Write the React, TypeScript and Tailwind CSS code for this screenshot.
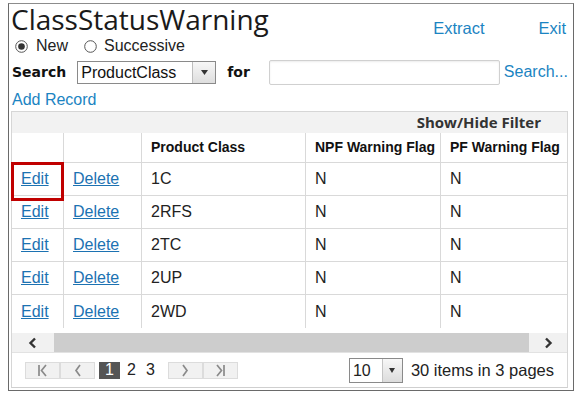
import React from "react";

const rows = ["1C", "2RFS", "2TC", "2UP", "2WD"];

function Radio({ checked }: { checked?: boolean }) {
  return (
    <svg width="13" height="13" viewBox="0 0 13 13" className="shrink-0">
      <circle cx="6.5" cy="6.5" r="5.8" fill="white" stroke="#555" strokeWidth="1" />
      {checked && <circle cx="6.5" cy="6.5" r="3.3" fill="#333" />}
    </svg>
  );
}

function PagerBtn({ children }: { children: React.ReactNode }) {
  return (
    <div className="w-[35px] h-[17px] bg-[#f1f1f1] border border-[#dcdcdc] flex items-center justify-center">
      {children}
    </div>
  );
}

export default function App() {
  const arial = { fontFamily: '"Liberation Sans", Arial, sans-serif' };
  return (
    <div className="w-[575px] h-[398px] bg-white pt-[3px] pl-[8px] relative" style={arial}>
      <div className="w-[566px] h-[388px] border border-[#6a6a6a] border-t-[#8c8c8c] flex flex-col">
        {/* Title row */}
        <div className="h-[32px] flex items-end justify-between pr-[7px]">
          <div
            className="text-[28px] leading-[32px] text-[#1a1a1a] pl-[2px] mb-[1px]"
            style={{ fontFamily: '"Open Sans", "Noto Sans", sans-serif' }}
          >
            ClassStatusWarning
          </div>
          <div className="flex gap-[54px] text-[16.5px] text-[#1b84c2] leading-[20px] mb-[-2px]">
            <span>Extract</span>
            <span>Exit</span>
          </div>
        </div>
        {/* Radio row */}
        <div className="h-[20px] flex items-center pl-[6px] text-[16px] text-[#222]">
          <Radio checked />
          <span className="ml-[8px]">New</span>
          <span className="ml-[16px]">
            <Radio />
          </span>
          <span className="ml-[7px]">Successive</span>
        </div>
        {/* Search row */}
        <div className="h-[26px] mt-[3px] flex items-center pl-[3px]">
          <span
            className="text-[14px] font-bold text-[#111]"
            style={{ fontFamily: '"DejaVu Sans", Verdana, sans-serif' }}
          >
            Search
          </span>
          <div className="ml-[11px] w-[139px] h-[23px] border border-[#8a8a8a] flex bg-white">
            <div className="flex-1 text-[16px] leading-[21px] pl-[3px] text-[#111]">ProductClass</div>
            <div className="w-[23px] h-full bg-gradient-to-b from-[#f7f7f7] to-[#dedede] border-l border-[#bdbdbd] flex items-center justify-center">
              <svg width="7" height="5" viewBox="0 0 7 5">
                <polygon points="0,0 7,0 3.5,5" fill="#333" />
              </svg>
            </div>
          </div>
          <span
            className="ml-[11px] text-[14px] font-bold text-[#111]"
            style={{ fontFamily: '"DejaVu Sans", Verdana, sans-serif' }}
          >
            for
          </span>
          <div className="ml-[19px] w-[231px] h-[25px] border border-[#d0d0d0] rounded-[2px] shadow-[inset_0_1px_2px_rgba(0,0,0,0.08)]" />
          <span className="ml-[4px] text-[16px] text-[#1b84c2]">Search...</span>
        </div>
        {/* Add record */}
        <div className="h-[22px] flex items-center pl-[3px] text-[16px] text-[#1b84c2] mt-[4px]">
          Add Record
        </div>
        {/* Grid */}
        <div className="ml-[2px] w-[557px] flex-1 border border-[#d6d6d6] border-b-[#cfcfcf] flex flex-col mb-[2px]">
          <div
            className="h-[21px] shrink-0 bg-[#f2f2f2] flex items-center justify-end pr-[26px] text-[15px] font-bold text-[#333]"
            style={{ fontFamily: '"Open Sans", "Noto Sans", sans-serif' }}
          >
            Show/Hide Filter
          </div>
          <div className="overflow-hidden shrink-0">
            <div className="flex h-[30px] border-b border-[#d9d9d9] text-[14px] font-bold text-[#111]">
              <div className="w-[52px] shrink-0 border-r border-[#d9d9d9]" />
              <div className="w-[78px] shrink-0 border-r border-[#d9d9d9]" />
              <div className="w-[164px] shrink-0 border-r border-[#d9d9d9] flex items-center pl-[9px]">Product Class</div>
              <div className="w-[135px] shrink-0 border-r border-[#d9d9d9] flex items-center pl-[9px] whitespace-nowrap">NPF Warning Flag</div>
              <div className="w-[140px] shrink-0 flex items-center pl-[9px] whitespace-nowrap">PF Warning Flag</div>
            </div>
            {rows.map((r, i) => (
              <div
                key={r}
                className={`flex h-[33px] text-[16px] text-[#222] ${i < rows.length - 1 ? "border-b border-[#d9d9d9]" : ""}`}
              >
                <div className="w-[52px] shrink-0 border-r border-[#d9d9d9] flex items-center pl-[9px]">
                  <span className="text-[#1c72b2] underline">Edit</span>
                </div>
                <div className="w-[78px] shrink-0 border-r border-[#d9d9d9] flex items-center pl-[9px]">
                  <span className="text-[#1c72b2] underline">Delete</span>
                </div>
                <div className="w-[164px] shrink-0 border-r border-[#d9d9d9] flex items-center pl-[9px]">{r}</div>
                <div className="w-[135px] shrink-0 border-r border-[#d9d9d9] flex items-center pl-[9px]">N</div>
                <div className="w-[140px] shrink-0 flex items-center pl-[9px]">N</div>
              </div>
            ))}
          </div>
          {/* scrollbar */}
          <div className="mt-[5px] h-[20px] shrink-0 flex border-b border-[#e2e2e2]">
            <div className="w-[42px] bg-[#f1f1f1] flex items-center justify-center">
              <svg width="10" height="12" viewBox="0 0 10 12">
                <polyline points="7,1.5 2.5,6 7,10.5" fill="none" stroke="#333" strokeWidth="2.4" />
              </svg>
            </div>
            <div className="flex-1 bg-[#cdcdcd]" />
            <div className="w-[38px] bg-[#f1f1f1] flex items-center justify-center">
              <svg width="10" height="12" viewBox="0 0 10 12">
                <polyline points="3,1.5 7.5,6 3,10.5" fill="none" stroke="#333" strokeWidth="2.4" />
              </svg>
            </div>
          </div>
          {/* pager */}
          <div className="flex-1 flex items-center pl-[13px] pr-[13px] text-[16px] text-[#222]">
            <div className="flex">
              <PagerBtn>
                <svg width="14" height="13" viewBox="0 0 14 13">
                  <line x1="3" y1="1" x2="3" y2="12" stroke="#8a8a8a" strokeWidth="1.7" />
                  <polyline points="10,1 5.5,6.5 10,12" fill="none" stroke="#8a8a8a" strokeWidth="1.7" />
                </svg>
              </PagerBtn>
              <PagerBtn>
                <svg width="10" height="13" viewBox="0 0 10 13">
                  <polyline points="7,1 3,6.5 7,12" fill="none" stroke="#8a8a8a" strokeWidth="1.7" />
                </svg>
              </PagerBtn>
            </div>
            <div className="ml-[4px] w-[21px] h-[17px] bg-[#555] text-white flex items-center justify-center leading-none">1</div>
            <span className="ml-[7px]">2</span>
            <span className="ml-[10px]">3</span>
            <div className="flex ml-[13px]">
              <PagerBtn>
                <svg width="10" height="13" viewBox="0 0 10 13">
                  <polyline points="3,1 7,6.5 3,12" fill="none" stroke="#8a8a8a" strokeWidth="1.7" />
                </svg>
              </PagerBtn>
              <PagerBtn>
                <svg width="14" height="13" viewBox="0 0 14 13">
                  <polyline points="4,1 8.5,6.5 4,12" fill="none" stroke="#8a8a8a" strokeWidth="1.7" />
                  <line x1="11" y1="1" x2="11" y2="12" stroke="#8a8a8a" strokeWidth="1.7" />
                </svg>
              </PagerBtn>
            </div>
            <div className="ml-auto flex items-center">
              <div className="w-[54px] h-[25px] border border-[#8a8a8a] flex bg-white">
                <div className="flex-1 pl-[3px] leading-[23px]">10</div>
                <div className="w-[20px] h-full bg-gradient-to-b from-[#f7f7f7] to-[#dcdcdc] border-l border-[#c4c4c4] flex items-center justify-center">
                  <svg width="6" height="5" viewBox="0 0 6 5">
                    <polygon points="0,0 6,0 3,5" fill="#333" />
                  </svg>
                </div>
              </div>
              <span className="ml-[8px] text-[16.5px]">30 items in 3 pages</span>
            </div>
          </div>
        </div>
      </div>
      {/* red annotation */}
      <div className="absolute left-[11px] top-[162px] w-[53px] h-[39px] border-[3px] border-[#c00000]" />
    </div>
  );
}
